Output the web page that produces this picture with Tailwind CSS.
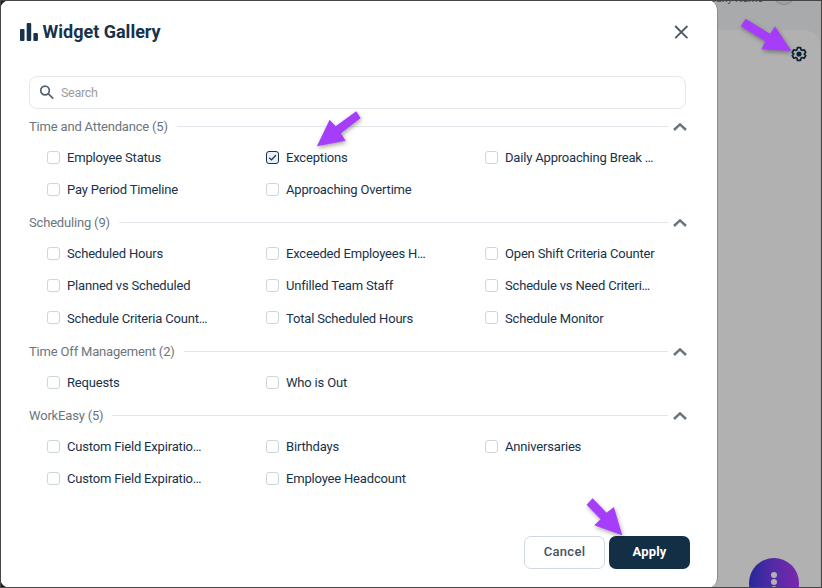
<!DOCTYPE html>
<html lang="en">

<head>
    <meta charset="UTF-8">
    <meta name="viewport" content="width=device-width, initial-scale=1.0">
    <title>Widget Gallery</title>
    <script src="https://cdn.jsdelivr.net/npm/@tailwindcss/browser@4"></script>
</head>

<body class="relative w-[822px] h-[588px] overflow-hidden bg-[#0e2030] font-['Roboto',sans-serif] text-[13px] text-[#17324a]">
    <!-- Dimmed page behind the dialog -->
    <div class="absolute left-[700px] top-0 w-[122px] h-[588px] overflow-hidden bg-[#a9aaac]">
        <span class="absolute right-[59px] -top-[8px] text-[10.500px] leading-[14px] text-[#42474c] whitespace-nowrap">Company Name</span>
        <div class="absolute left-[72px] -top-[19px] size-6 rounded-full border border-[#85878b] bg-[#9fa1a5]"></div>
        <div class="absolute left-0 top-[30px] w-[120px] h-[570px] rounded-tr-[16px] bg-[#b1b1b1]"></div>
        <svg class="absolute left-[91px] top-[45.500px] size-4" viewBox="0 0 24 24" fill="none" stroke="#0b2232" stroke-width="2.500" stroke-linejoin="round">
            <path d="M9.600 2.500h4.800l.6 3.200 1.800 1 3-1.100 2.300 4-2.400 2.400 2.400 2.400-2.300 4-3-1.100-1.800 1-.6 3.200H9.600L9 18.300l-1.800-1-3 1.100-2.300-4L4.300 12 1.900 9.600l2.300-4 3 1.100 1.800-1z" />
            <circle cx="12" cy="12" r="2.600" fill="#0b2232" />
        </svg>
        <div class="absolute left-[49px] top-[558px] size-[50px] rounded-full bg-linear-to-r from-[#27279b] to-[#7b27ae] flex flex-col items-center gap-px pt-[14px]">
            <i class="size-1.5 shrink-0 rounded-full bg-[#b1b1b1]"></i>
            <i class="size-1.5 shrink-0 rounded-full bg-[#b1b1b1]"></i>
            <i class="size-1.5 shrink-0 rounded-full bg-[#b1b1b1]"></i>
        </div>
    </div>

    <!-- Dialog -->
    <main class="relative w-[718px] h-[588px] rounded-[10px] border-r border-[#8c8c8c] bg-white flex flex-col pl-[29px] pr-[31px]">
        <header class="flex items-center justify-between h-16 -ml-[9px] -mr-1.5">
            <div class="flex items-center gap-[4.500px]">
                <svg class="w-[18px] h-[18px]" viewBox="0 0 18 18" fill="#17324a">
                    <rect x="0" y="6" width="4.500" height="12" rx="1" />
                    <rect x="6.700" y="0" width="4.500" height="18" rx="1" />
                    <rect x="13.400" y="10" width="4.500" height="8" rx="1" />
                </svg>
                <h1 class="text-[18px] leading-6 font-bold">Widget Gallery</h1>
            </div>
            <svg class="size-4 mr-[3px]" viewBox="0 0 16 16" fill="none" stroke="#4a5968" stroke-width="1.800">
                <path d="M2.200 2l12.200 12.200M14.400 2L2.200 14.200" />
            </svg>
        </header>

        <div class="mt-3 flex items-center w-[657px] h-[33px] shrink-0 rounded-lg border border-[#e3e8ec] pl-[9px]">
            <svg class="size-4" viewBox="0 0 16 16" fill="none" stroke="#55626e" stroke-width="1.700">
                <circle cx="6" cy="5.500" r="4.300" />
                <path d="M9.200 8.700l5 5" />
            </svg>
            <span class="ml-1.5 pt-px text-[12.500px] tracking-[-0.300px] text-[#9a9da0]">Search</span>
        </div>

        <div class="mt-[1.500px] tracking-[-0.180px]">
            <section>
                <div class="flex items-center h-[32.150px] text-[#6d757d]">
                    <h2>Time and Attendance (5)</h2>
                    <hr class="flex-1 ml-[9px] mr-[5px] border-[#e0e6eb]">
                    <svg class="w-[14px] h-2 -mr-px" viewBox="0 0 14 8" fill="none" stroke="#6b757f" stroke-width="2.500"><path d="M1 7l6-5.600L13 7" /></svg>
                </div>
                <div class="grid grid-cols-[219px_219px_180px] auto-rows-[32.120px] items-center pl-[18px] -mt-px mb-px">
                    <label class="flex items-center gap-[7px]"><i class="size-[13px] -mt-px rounded-[3px] border border-[#cbd8d8]"></i>Employee Status</label>
                    <label class="flex items-center gap-[7px]"><i class="size-[13px] -mt-px rounded-[3px] border border-[#17324a] bg-[#e8f0f7]"><svg class="size-[11px]" viewBox="0 0 11 11" fill="none" stroke="#17324a" stroke-width="1.300"><path d="M2.300 5.700l2.200 2.200 4.300-4.600" /></svg></i>Exceptions</label>
                    <label class="flex items-center gap-[7px]"><i class="size-[13px] -mt-px rounded-[3px] border border-[#cbd8d8]"></i>Daily Approaching Break …</label>
                    <label class="flex items-center gap-[7px]"><i class="size-[13px] -mt-px rounded-[3px] border border-[#cbd8d8]"></i>Pay Period Timeline</label>
                    <label class="flex items-center gap-[7px]"><i class="size-[13px] -mt-px rounded-[3px] border border-[#cbd8d8]"></i>Approaching Overtime</label>
                </div>
            </section>

            <section>
                <div class="flex items-center h-[32.150px] text-[#6d757d]">
                    <h2>Scheduling (9)</h2>
                    <hr class="flex-1 ml-[9px] mr-[5px] border-[#e0e6eb]">
                    <svg class="w-[14px] h-2 -mr-px" viewBox="0 0 14 8" fill="none" stroke="#6b757f" stroke-width="2.500"><path d="M1 7l6-5.600L13 7" /></svg>
                </div>
                <div class="grid grid-cols-[219px_219px_180px] grid-rows-[32px_32px_32.500px] items-center pl-[18px] -mt-px mb-px">
                    <label class="flex items-center gap-[7px]"><i class="size-[13px] -mt-px rounded-[3px] border border-[#cbd8d8]"></i>Scheduled Hours</label>
                    <label class="flex items-center gap-[7px]"><i class="size-[13px] -mt-px rounded-[3px] border border-[#cbd8d8]"></i>Exceeded Employees H…</label>
                    <label class="flex items-center gap-[7px]"><i class="size-[13px] -mt-px rounded-[3px] border border-[#cbd8d8]"></i>Open Shift Criteria Counter</label>
                    <label class="flex items-center gap-[7px]"><i class="size-[13px] -mt-px rounded-[3px] border border-[#cbd8d8]"></i>Planned vs Scheduled</label>
                    <label class="flex items-center gap-[7px]"><i class="size-[13px] -mt-px rounded-[3px] border border-[#cbd8d8]"></i>Unfilled Team Staff</label>
                    <label class="flex items-center gap-[7px]"><i class="size-[13px] -mt-px rounded-[3px] border border-[#cbd8d8]"></i>Schedule vs Need Criteri…</label>
                    <label class="flex items-center gap-[7px]"><i class="size-[13px] -mt-px rounded-[3px] border border-[#cbd8d8]"></i>Schedule Criteria Count…</label>
                    <label class="flex items-center gap-[7px]"><i class="size-[13px] -mt-px rounded-[3px] border border-[#cbd8d8]"></i>Total Scheduled Hours</label>
                    <label class="flex items-center gap-[7px]"><i class="size-[13px] -mt-px rounded-[3px] border border-[#cbd8d8]"></i>Schedule Monitor</label>
                </div>
            </section>

            <section>
                <div class="flex items-center h-[32.150px] text-[#6d757d]">
                    <h2>Time Off Management (2)</h2>
                    <hr class="flex-1 ml-[9px] mr-[5px] border-[#e0e6eb]">
                    <svg class="w-[14px] h-2 -mr-px" viewBox="0 0 14 8" fill="none" stroke="#6b757f" stroke-width="2.500"><path d="M1 7l6-5.600L13 7" /></svg>
                </div>
                <div class="grid grid-cols-[219px_219px_180px] auto-rows-[32.150px] items-center pl-[18px] -mt-px mb-px">
                    <label class="flex items-center gap-[7px]"><i class="size-[13px] -mt-px rounded-[3px] border border-[#cbd8d8]"></i>Requests</label>
                    <label class="flex items-center gap-[7px]"><i class="size-[13px] -mt-px rounded-[3px] border border-[#cbd8d8]"></i>Who is Out</label>
                </div>
            </section>

            <section>
                <div class="flex items-center h-[32.150px] text-[#6d757d]">
                    <h2>WorkEasy (5)</h2>
                    <hr class="flex-1 ml-[9px] mr-[5px] border-[#e0e6eb]">
                    <svg class="w-[14px] h-2 -mr-px" viewBox="0 0 14 8" fill="none" stroke="#6b757f" stroke-width="2.500"><path d="M1 7l6-5.600L13 7" /></svg>
                </div>
                <div class="grid grid-cols-[219px_219px_180px] auto-rows-[32.150px] items-center pl-[18px] -mt-px mb-px">
                    <label class="flex items-center gap-[7px]"><i class="size-[13px] -mt-px rounded-[3px] border border-[#cbd8d8]"></i>Custom Field Expiratio…</label>
                    <label class="flex items-center gap-[7px]"><i class="size-[13px] -mt-px rounded-[3px] border border-[#cbd8d8]"></i>Birthdays</label>
                    <label class="flex items-center gap-[7px]"><i class="size-[13px] -mt-px rounded-[3px] border border-[#cbd8d8]"></i>Anniversaries</label>
                    <label class="flex items-center gap-[7px]"><i class="size-[13px] -mt-px rounded-[3px] border border-[#cbd8d8]"></i>Custom Field Expiratio…</label>
                    <label class="flex items-center gap-[7px]"><i class="size-[13px] -mt-px rounded-[3px] border border-[#cbd8d8]"></i>Employee Headcount</label>
                </div>
            </section>
        </div>

        <footer class="mt-auto mb-[19px] -mr-1 flex justify-end gap-1 font-bold">
            <button class="w-[81px] h-[33px] pb-[2px] rounded-[7px] border border-[#d0d8e2] font-medium tracking-[0.300px] text-[#44525f]">Cancel</button>
            <button class="w-[81px] h-[33px] pb-[2px] rounded-[7px] bg-[#132f45] tracking-[0.150px] text-white">Apply</button>
        </footer>
    </main>

    <!-- Pointer arrows -->
    <svg class="absolute inset-0 w-[822px] h-[588px] drop-shadow-[1px_2px_2px_rgba(0,0,0,0.350)]" viewBox="0 0 822 588" fill="#a63dfb">
        <path d="M745.500 18.700L770 33.700 775 26.300 791.400 51 761.400 49.300 765.400 41.300 740.700 26.300z" />
        <path d="M356.200 111.300L360.600 118 340.900 133.300 345.600 140.700 316.900 146.300 329.600 119.700 335.600 126.300z" />
        <path d="M592.600 498.300L606.600 512.700 613.900 507 622.200 535.300 594.200 525.300 600.600 519.300 586.600 504.700z" />
    </svg>

    <!-- Window frame -->
    <div class="absolute inset-0 border border-[#454545]"></div>
</body>

</html>
